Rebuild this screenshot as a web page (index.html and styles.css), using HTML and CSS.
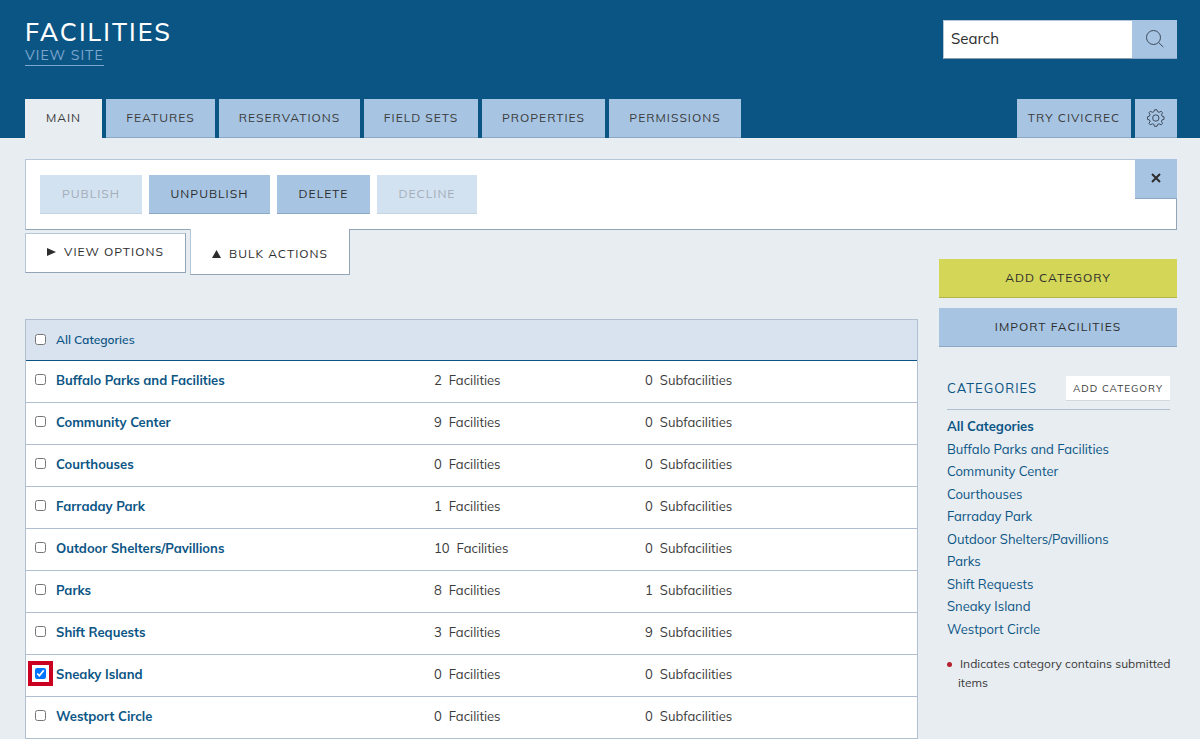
FILE: index.html
```html
<!DOCTYPE html>
<html lang="en">
<head>
    <meta charset="UTF-8">
    <title>Facilities</title>
    <link rel="stylesheet" href="styles.css">
</head>
<body>
    <header class="header">
        <div class="header-top">
            <div class="title">
                <h1>Facilities</h1>
                <a href="#" class="view-site">View Site</a>
            </div>
            <form class="search">
                <input type="text" value="Search" aria-label="Search">
                <button type="button" aria-label="Run search">
                    <svg width="18" height="18" viewBox="0 0 18 18" fill="none" stroke="#3d4a5a">
                        <circle cx="7.5" cy="7.5" r="7"/>
                        <path d="M12.5 12.5L17.3 17"/>
                    </svg>
                </button>
            </form>
        </div>
        <nav class="nav">
            <div class="tabs">
                <a href="#" class="tab active">Main</a>
                <a href="#" class="tab">Features</a>
                <a href="#" class="tab">Reservations</a>
                <a href="#" class="tab">Field Sets</a>
                <a href="#" class="tab">Properties</a>
                <a href="#" class="tab">Permissions</a>
            </div>
            <div class="nav-right">
                <a href="#" class="tab">Try CivicRec</a>
                <a href="#" class="tab icon-tab" aria-label="Settings">
                    <svg width="18" height="18" viewBox="0 0 18 18" fill="none" stroke="#3d4a5a">
                        <path d="M7.5 .8h2.500l.6 1.900 1.400.6 2.300-1 1.200 1.200-1 2.300.6 1.400 1.900.6v2.500l-1.900.6-.6 1.400 1 2.300-1.200 1.200-2.300-1-1.400.6-.6 1.900H7.500l-.6-1.900-1.400-.6-2.300 1L2 14.600l1-2.300-.6-1.400-1.900-.6V7.800l1.900-.6L3 5.800l-1-2.300 1.200-1.200 2.300 1 1.400-.6z"/>
                        <circle cx="8.8" cy="9" r="3.2"/>
                    </svg>
                </a>
            </div>
        </nav>
    </header>

    <main class="page">
        <section class="bulk-panel">
            <div class="bulk-buttons">
                <button class="btn" disabled>Publish</button>
                <button class="btn">Unpublish</button>
                <button class="btn">Delete</button>
                <button class="btn" disabled>Decline</button>
            </div>
            <button class="close" aria-label="Close">
                <svg width="10" height="10" viewBox="0 0 10 10" stroke="#2d2d2d" stroke-width="2">
                    <path d="M1 1l8 8M9 1l-8 8"/>
                </svg>
            </button>
        </section>

        <div class="columns">
            <div class="content">
                <div class="panel-tabs">
                    <button class="panel-tab">
                        <svg width="9" height="8" viewBox="0 0 9 8" fill="#2d2d2d"><path d="M0 0l9 4-9 4z"/></svg>
                        View Options
                    </button>
                    <button class="panel-tab open">
                        <svg width="9" height="8" viewBox="0 0 9 8" fill="#2d2d2d"><path d="M4.5 0L9 8H0z"/></svg>
                        Bulk Actions
                    </button>
                </div>

                <table class="categories">
                    <thead>
                        <tr>
                            <th class="col-check"><input type="checkbox" id="all"></th>
                            <th class="col-name"><label for="all">All Categories</label></th>
                            <th class="col-count"></th>
                            <th></th>
                        </tr>
                    </thead>
                    <tbody>
                        <tr>
                            <td><input type="checkbox" aria-label="Buffalo Parks and Facilities"></td>
                            <td><a href="#">Buffalo Parks and Facilities</a></td>
                            <td><span class="num">2</span>Facilities</td>
                            <td><span class="num">0</span>Subfacilities</td>
                        </tr>
                        <tr>
                            <td><input type="checkbox" aria-label="Community Center"></td>
                            <td><a href="#">Community Center</a></td>
                            <td><span class="num">9</span>Facilities</td>
                            <td><span class="num">0</span>Subfacilities</td>
                        </tr>
                        <tr>
                            <td><input type="checkbox" aria-label="Courthouses"></td>
                            <td><a href="#">Courthouses</a></td>
                            <td><span class="num">0</span>Facilities</td>
                            <td><span class="num">0</span>Subfacilities</td>
                        </tr>
                        <tr>
                            <td><input type="checkbox" aria-label="Farraday Park"></td>
                            <td><a href="#">Farraday Park</a></td>
                            <td><span class="num">1</span>Facilities</td>
                            <td><span class="num">0</span>Subfacilities</td>
                        </tr>
                        <tr>
                            <td><input type="checkbox" aria-label="Outdoor Shelters/Pavillions"></td>
                            <td><a href="#">Outdoor Shelters/Pavillions</a></td>
                            <td><span class="num">10</span>Facilities</td>
                            <td><span class="num">0</span>Subfacilities</td>
                        </tr>
                        <tr>
                            <td><input type="checkbox" aria-label="Parks"></td>
                            <td><a href="#">Parks</a></td>
                            <td><span class="num">8</span>Facilities</td>
                            <td><span class="num">1</span>Subfacilities</td>
                        </tr>
                        <tr>
                            <td><input type="checkbox" aria-label="Shift Requests"></td>
                            <td><a href="#">Shift Requests</a></td>
                            <td><span class="num">3</span>Facilities</td>
                            <td><span class="num">9</span>Subfacilities</td>
                        </tr>
                        <tr>
                            <td><input type="checkbox" class="marked" aria-label="Sneaky Island" checked></td>
                            <td><a href="#">Sneaky Island</a></td>
                            <td><span class="num">0</span>Facilities</td>
                            <td><span class="num">0</span>Subfacilities</td>
                        </tr>
                        <tr>
                            <td><input type="checkbox" aria-label="Westport Circle"></td>
                            <td><a href="#">Westport Circle</a></td>
                            <td><span class="num">0</span>Facilities</td>
                            <td><span class="num">0</span>Subfacilities</td>
                        </tr>
                    </tbody>
                </table>
            </div>

            <aside class="sidebar">
                <button class="btn green">Add Category</button>
                <button class="btn">Import Facilities</button>

                <div class="side-list">
                    <div class="side-head">
                        <h2>Categories</h2>
                        <button class="small-btn">Add Category</button>
                    </div>
                    <ul>
                        <li><a href="#" class="current">All Categories</a></li>
                        <li><a href="#">Buffalo Parks and Facilities</a></li>
                        <li><a href="#">Community Center</a></li>
                        <li><a href="#">Courthouses</a></li>
                        <li><a href="#">Farraday Park</a></li>
                        <li><a href="#">Outdoor Shelters/Pavillions</a></li>
                        <li><a href="#">Parks</a></li>
                        <li><a href="#">Shift Requests</a></li>
                        <li><a href="#">Sneaky Island</a></li>
                        <li><a href="#">Westport Circle</a></li>
                    </ul>
                    <p class="note"><span class="dot"></span>Indicates category contains submitted items</p>
                </div>
            </aside>
        </div>
    </main>
</body>
</html>
```
FILE: styles.css
```css
* {
    box-sizing: border-box;
}
body {
    margin: 0;
    background-color: #e8edf1;
    color: #3b3b3b;
    font-family: Mulish, Muli, Lato, sans-serif;
    font-size: 13px;
}
button, input {
    font-family: inherit;
    margin: 0;
}
button {
    cursor: pointer;
}
a {
    color: #0b5585;
    text-decoration: none;
}

/* header */
.header {
    background-color: #0b5585;
    padding: 18px 23px 0 25px;
}
.header-top {
    display: flex;
    justify-content: space-between;
    align-items: flex-start;
    height: 81px;
}
.title h1 {
    margin: 0;
    color: #fff;
    font-size: 25px;
    line-height: 28px;
    font-weight: 500;
    letter-spacing: 2px;
    text-transform: uppercase;
}
.view-site {
    display: inline-block;
    color: #7ba6cd;
    font-size: 14px;
    line-height: 19px;
    letter-spacing: 1px;
    text-transform: uppercase;
    border-bottom: 1px solid #7ba6cd;
}
.search {
    display: flex;
    margin-top: 2px;
}
.search input {
    width: 189px;
    height: 39px;
    padding: 0 7px 2px;
    border: 1px solid #b5c6d9;
    border-right: none;
    border-bottom-color: #8c9db0;
    border-radius: 0;
    background-color: #fff;
    color: #2d2d2d;
    font-size: 15px;
}
.search button {
    width: 45px;
    height: 39px;
    padding: 2px 0 0;
    border: none;
    border-bottom: 1px solid #8ba9c7;
    background-color: #a7c5e3;
}
.nav {
    display: flex;
    justify-content: space-between;
}
.tabs {
    display: grid;
    grid-template-columns: 77px 109px 141px 114px 123px 132px;
    gap: 4px;
}
.nav-right {
    display: grid;
    grid-template-columns: 114px 42px;
    gap: 4px;
}
.tab {
    display: flex;
    align-items: center;
    justify-content: center;
    height: 39px;
    padding-bottom: 2px;
    background-color: #a7c5e3;
    border-bottom: 1px solid #8ba9c7;
    color: #3b3b3b;
    font-size: 12px;
    letter-spacing: 1px;
    text-transform: uppercase;
}
.tab.active {
    background-color: #e8edf1;
    border-bottom-color: #e8edf1;
}
.icon-tab {
    padding-bottom: 0;
}

/* buttons */
.btn {
    height: 39px;
    padding: 0 22px 2px;
    border: none;
    border-bottom: 1px solid #8ba9c7;
    background-color: #a7c5e3;
    color: #2d2d2d;
    font-size: 12px;
    letter-spacing: 1px;
    text-transform: uppercase;
}
.btn:disabled {
    background-color: #d3e2f1;
    border-bottom-color: #c5d4e3;
    color: #a3adb8;
}
.btn.green {
    background-color: #d3d657;
    border-bottom-color: #b1b449;
}

/* bulk actions panel */
.page {
    padding: 21px 23px 0 25px;
}
.bulk-panel {
    display: flex;
    justify-content: space-between;
    align-items: flex-start;
    height: 71px;
    background-color: #fff;
    border: 1px solid #b5c6d9;
    border-right-color: #93a4b7;
    border-bottom-color: #93a4b7;
}
.bulk-buttons {
    display: grid;
    grid-template-columns: 102px 121px 93px 100px;
    gap: 7px;
    padding: 15px 14px;
}
.bulk-buttons .btn {
    padding: 0 0 2px;
}
.close {
    width: 42px;
    height: 40px;
    margin: -1px;
    padding: 0 0 2px;
    border: none;
    border-bottom: 1px solid #8ba9c7;
    background-color: #a7c5e3;
}
.columns {
    display: grid;
    grid-template-columns: minmax(0, 1fr) 238px;
    gap: 21px;
}
.panel-tabs {
    display: flex;
    gap: 4px;
    height: 46px;
    margin: -1px 0 44px;
    align-items: flex-start;
}
.panel-tab {
    display: flex;
    align-items: center;
    justify-content: center;
    gap: 8px;
    width: 161px;
    height: 40px;
    margin-top: 4px;
    padding: 0 0 3px;
    background-color: #fff;
    border: 1px solid #b5c6d9;
    border-right-color: #93a4b7;
    border-bottom-color: #93a4b7;
    color: #2d2d2d;
    font-size: 12px;
    letter-spacing: 1px;
    text-transform: uppercase;
}
.panel-tab.open {
    width: 160px;
    height: 46px;
    margin-top: 0;
    padding: 4px 0 0;
    border-top: none;
}

/* categories table */
.categories {
    width: 100%;
    table-layout: fixed;
    border-spacing: 0;
    border: 1px solid #b0bfd0;
    border-bottom: none;
    background-color: #fff;
}
.categories th,
.categories td {
    height: 42px;
    padding: 0 0 3px;
    border-bottom: 1px solid #b0bfd0;
    text-align: left;
}
.categories th {
    height: 41px;
    padding-bottom: 1px;
    background-color: #d9e3ef;
    border-bottom-color: #0b5585;
    color: #0b5585;
    font-size: 12px;
    font-weight: 600;
}
.col-check {
    width: 30px;
}
.col-name {
    width: 378px;
}
.col-count {
    width: 211px;
}
.categories input {
    display: block;
    width: 11px;
    height: 11px;
    margin: 0 9px 1px;
}
.categories td a {
    font-weight: bold;
}
.num {
    margin-right: 7px;
}
.categories input.marked {
    outline: 4px solid #cb0020;
    outline-offset: 3px;
}

/* sidebar */
.sidebar {
    display: flex;
    flex-direction: column;
    gap: 10px;
    padding-top: 29px;
}
.side-list {
    padding: 19px 0 0 8px;
}
.side-head {
    display: flex;
    justify-content: space-between;
    align-items: flex-start;
    height: 34px;
    margin-right: 7px;
    border-bottom: 1px solid #b0bfd0;
}
.side-head h2 {
    margin: 0;
    color: #0b5585;
    font-size: 13px;
    line-height: 25px;
    font-weight: normal;
    letter-spacing: 1px;
    text-transform: uppercase;
}
.small-btn {
    width: 104px;
    height: 25px;
    padding: 0;
    border: none;
    border-bottom: 1px solid #d3d8dc;
    background-color: #fff;
    color: #3b3b3b;
    font-size: 10px;
    letter-spacing: 1px;
    text-transform: uppercase;
}
.side-list ul {
    margin: 5px 0 0;
    padding: 0;
    list-style: none;
    line-height: 22px;
}
.side-list li:nth-child(odd) {
    padding-bottom: 1px;
}
.current {
    font-weight: bold;
}
.note {
    position: relative;
    margin: 14px 0 0;
    padding-left: 11px;
    font-size: 12px;
    line-height: 19px;
    text-indent: 2px;
}
.dot {
    position: absolute;
    left: 0;
    top: 8px;
    width: 5px;
    height: 5px;
    border-radius: 50%;
    background-color: #b5202e;
}
```
